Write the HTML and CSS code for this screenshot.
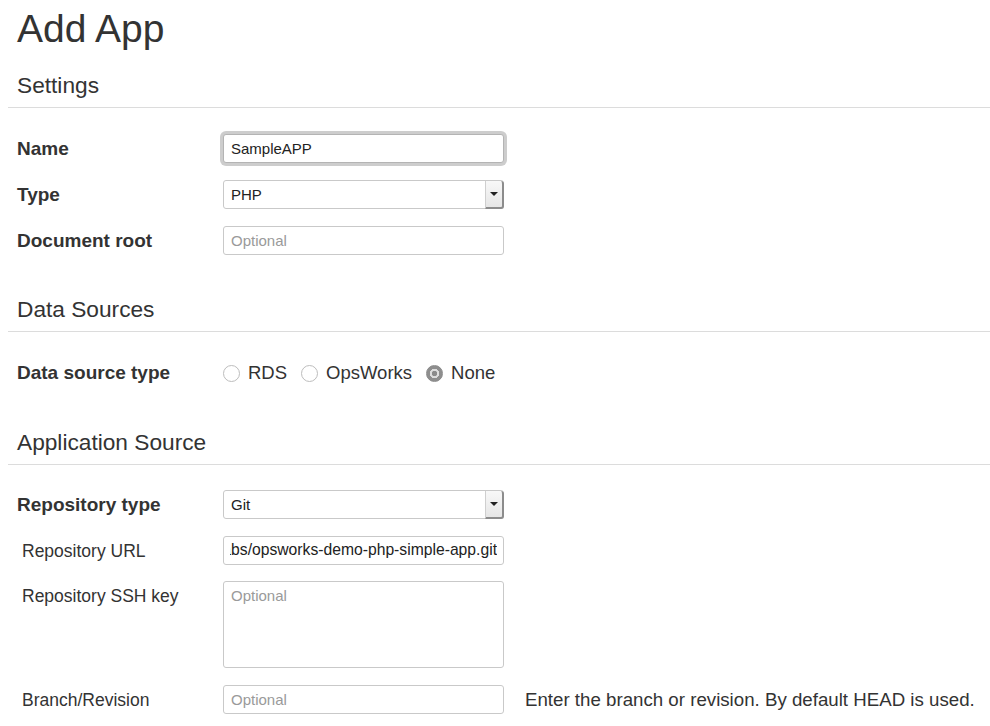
FILE: index.html
```html
<!DOCTYPE html>
<html lang="en">
<head>
<meta charset="utf-8">
<title>Add App</title>
<link rel="stylesheet" href="styles.css">
</head>
<body>
<div class="page">
  <h1 class="title">Add App</h1>

  <section class="section section-first">
    <h2 class="section-title">Settings</h2>
    <div class="fields">
      <div class="row">
        <label class="label label-strong" for="name">Name</label>
        <input class="input input-focus" id="name" type="text" value="SampleAPP">
      </div>
      <div class="row">
        <label class="label label-strong" for="type">Type</label>
        <div class="select-wrap">
          <select class="select" id="type"><option>PHP</option></select>
          <span class="select-btn"><span class="caret"></span></span>
        </div>
      </div>
      <div class="row">
        <label class="label label-strong" for="docroot">Document root</label>
        <input class="input" id="docroot" type="text" placeholder="Optional">
      </div>
    </div>
  </section>

  <section class="section section-data">
    <h2 class="section-title">Data Sources</h2>
    <div class="fields">
      <div class="row">
        <span class="label label-strong">Data source type</span>
        <div class="radio-group">
          <label class="radio-option"><input class="radio" type="radio" name="ds"><span>RDS</span></label>
          <label class="radio-option"><input class="radio" type="radio" name="ds"><span>OpsWorks</span></label>
          <label class="radio-option"><input class="radio" type="radio" name="ds" checked><span>None</span></label>
        </div>
      </div>
    </div>
  </section>

  <section class="section section-app">
    <h2 class="section-title">Application Source</h2>
    <div class="fields fields-app">
      <div class="row">
        <label class="label label-strong" for="repotype">Repository type</label>
        <div class="select-wrap">
          <select class="select" id="repotype"><option>Git</option></select>
          <span class="select-btn"><span class="caret"></span></span>
        </div>
      </div>
      <div class="row">
        <label class="label label-plain" for="repourl">Repository URL</label>
        <input class="input input-end" id="repourl" type="text" value="https://github.com/awslabs/opsworks-demo-php-simple-app.git">
      </div>
      <div class="row row-top">
        <label class="label label-plain label-top" for="sshkey">Repository SSH key</label>
        <textarea class="textarea" id="sshkey" placeholder="Optional"></textarea>
      </div>
      <div class="row">
        <label class="label label-plain" for="branch">Branch/Revision</label>
        <input class="input" id="branch" type="text" placeholder="Optional">
        <span class="help">Enter the branch or revision. By default HEAD is used.</span>
      </div>
    </div>
  </section>
</div>
</body>
</html>
```
FILE: styles.css
```css
* {
  box-sizing: border-box;
}

body {
  margin: 0;
  background: #fff;
  color: #333;
  font-family: "Liberation Sans", Arial, Helvetica, sans-serif;
}

.page {
  padding: 0 0 0 8px;
}

.title {
  margin: 8px 0 0 9px;
  font-size: 39px;
  line-height: 42px;
  font-weight: normal;
  color: #333;
}

.section {
  margin-top: 42px;
}

.section-first {
  margin-top: 22px;
}

.section-data {
  margin-top: 41px;
}

.section-title {
  margin: 0;
  padding: 0 0 9px 9px;
  font-size: 22.7px;
  line-height: 26px;
  font-weight: normal;
  color: #333;
  border-bottom: 1px solid #dcdcdc;
}

.fields {
  display: flex;
  flex-direction: column;
  gap: 16px;
  padding: 25px 0 0 9px;
}

.fields-app {
  padding-top: 24px;
}

.row {
  display: flex;
  align-items: center;
  min-height: 30px;
}

.row-top {
  align-items: flex-start;
}

.label {
  flex: 0 0 206px;
  color: #333;
}

.label-strong {
  font-size: 19px;
  font-weight: bold;
  padding-top: 2px;
}

.label-plain {
  padding-left: 5px;
  padding-top: 2px;
  font-size: 17.5px;
  line-height: 20px;
}

.label-top {
  padding-top: 5px;
}

.input,
.select,
.textarea {
  width: 281px;
  border: 1px solid #c9c9c9;
  border-radius: 3px;
  background: #fff;
  color: #222;
  font-family: "Liberation Sans", Arial, Helvetica, sans-serif;
  font-size: 15px;
  outline: none;
}

.input {
  height: 29px;
  padding: 0 7px;
}

.input::placeholder,
.textarea::placeholder {
  color: #9a9a9a;
}

.input-focus {
  border-color: #b4b4b4;
  box-shadow: 0 0 0 3px #cdcdcd;
}

.input-end {
  direction: rtl;
  padding: 0 6px;
  font-size: 15.7px;
}

.select-wrap {
  position: relative;
  width: 281px;
  height: 29px;
}

.select {
  width: 100%;
  height: 100%;
  padding: 0 7px;
  appearance: none;
  -webkit-appearance: none;
}

.select-btn {
  position: absolute;
  top: 1px;
  right: 0;
  bottom: 0;
  width: 19px;
  display: flex;
  align-items: center;
  justify-content: center;
  background: linear-gradient(#f8f8f8, #e6e6e6);
  border-left: 1px solid #cfcfcf;
  border-right: 2px solid #8c8c8c;
  border-bottom: 2px solid #8c8c8c;
  border-radius: 0 3px 3px 0;
  pointer-events: none;
}

.caret {
  width: 0;
  height: 0;
  border-left: 4px solid transparent;
  border-right: 4px solid transparent;
  border-top: 4px solid #222;
}

.textarea {
  height: 87px;
  padding: 5px 7px;
  line-height: 18px;
  resize: none;
}

.radio-group {
  display: flex;
  align-items: center;
  font-size: 18.5px;
  color: #333;
  padding-top: 2px;
}

.radio-option {
  display: flex;
  align-items: center;
  gap: 8px;
  margin-right: 14px;
}

.radio {
  appearance: none;
  -webkit-appearance: none;
  width: 17px;
  height: 17px;
  margin: 0;
  border: 1px solid #bdbdbd;
  border-radius: 50%;
  background: #fff;
}

.radio:checked {
  border-color: #8a8a8a;
  background: radial-gradient(circle, #8a8a8a 0 2.5px, #dcdcdc 3px 4.5px, #8e8e8e 5px);
}

.help {
  margin-left: 21px;
  padding-top: 2px;
  font-size: 18.7px;
  color: #333;
  white-space: nowrap;
}
```
